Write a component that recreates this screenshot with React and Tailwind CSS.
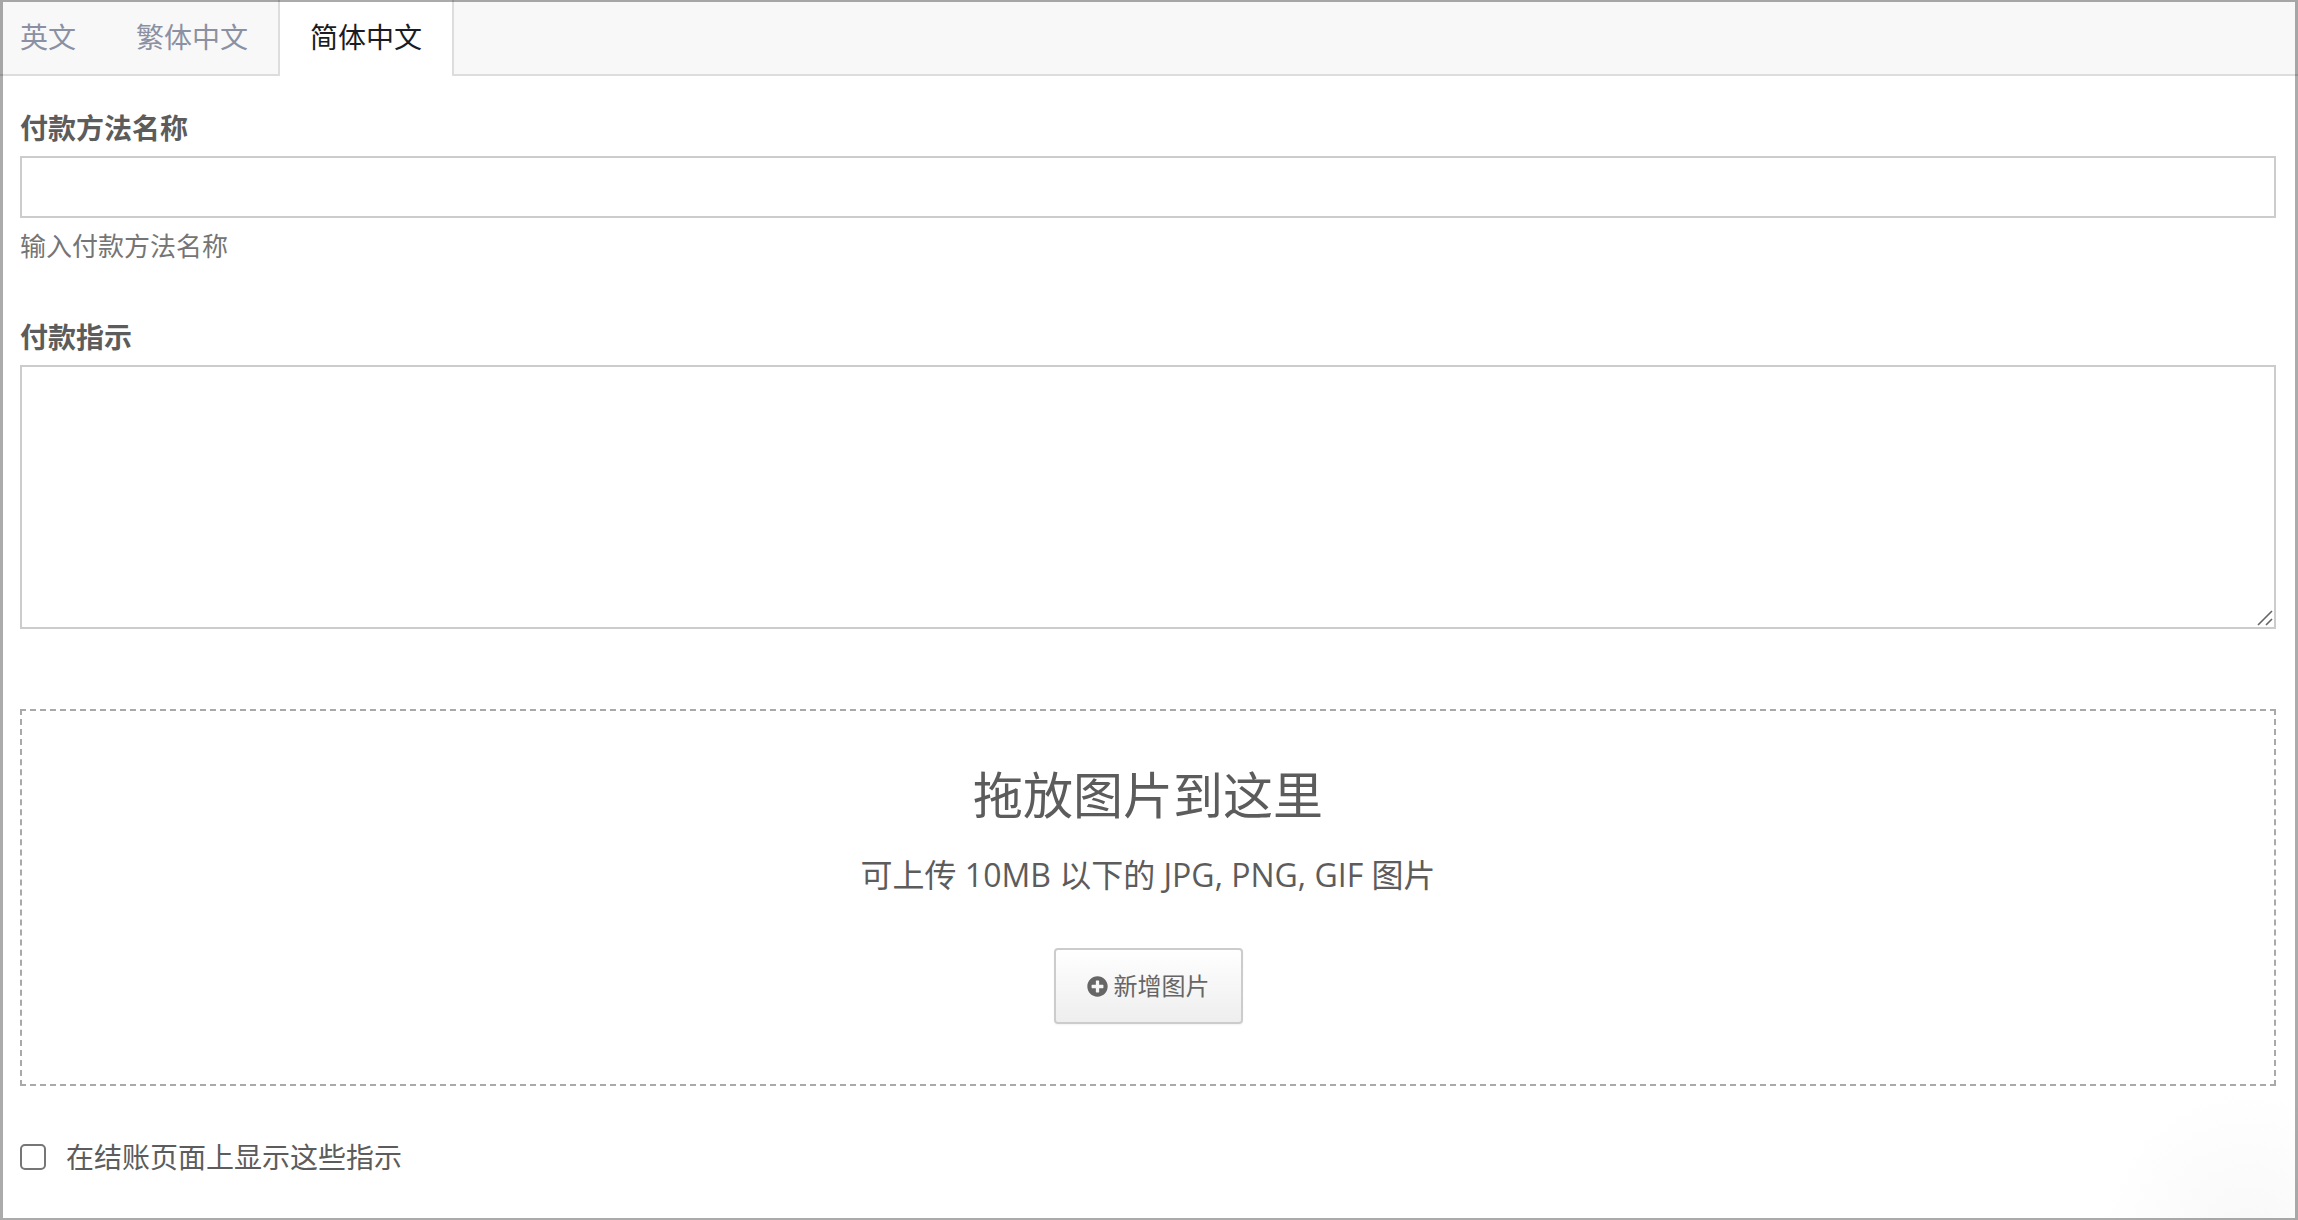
import { useState } from 'react';
import clsx from 'clsx';
import { FaPlusCircle } from 'react-icons/fa';

const LANGUAGES = [
    { key: 'en', label: '英文' },
    { key: 'zh-hant', label: '繁体中文' },
    { key: 'zh-hans', label: '简体中文' },
];

function LanguageTabs({ active, onChange }) {
    return (
        <div role="tablist" className="flex border-b-2 border-[#dddddd] bg-[#f8f8f8]">
            {LANGUAGES.map(({ key, label }, index) => (
                <button
                    key={key}
                    type="button"
                    role="tab"
                    aria-selected={active === key}
                    onClick={() => onChange(key)}
                    className={clsx(
                        '-mb-[2px] h-[76px] pr-[30px] pb-[2px] text-[28px] leading-[40px]',
                        index === 0 ? 'pl-5' : 'pl-[30px]',
                        active === key
                            ? 'border-x-2 border-[#dddddd] bg-white text-[#1b1c23]'
                            : 'text-[#8b91a3]'
                    )}
                >
                    {label}
                </button>
            ))}
        </div>
    );
}

function ResizeGrip() {
    return (
        <svg
            viewBox="0 0 16 16"
            className="pointer-events-none absolute right-[3px] bottom-[3px] h-4 w-4"
            fill="none"
            stroke="#666666"
            strokeWidth="1.6"
            aria-hidden="true"
        >
            <path d="M1 15 15 1M9 15l6-6" />
        </svg>
    );
}

function ImageDropzone() {
    return (
        <section className="mt-20 flex flex-col items-center border-2 border-dashed border-[#a9a9a9] pt-12 pb-[60px] text-center">
            <h2 className="text-[50px] leading-[72px]">拖放图片到这里</h2>
            <p className="mt-5 text-[32px] leading-[48px]">可上传 10MB 以下的 JPG, PNG, GIF 图片</p>
            <button
                type="button"
                className="mt-[49px] flex h-[76px] items-center gap-1.5 rounded border-2 border-[#cccccc] bg-gradient-to-b from-white to-[#eeeeee] px-[31px] text-[24px] leading-[36px] text-[#666666] shadow-xs"
            >
                <FaPlusCircle className="h-[21px] w-[21px]" />
                新增图片
            </button>
        </section>
    );
}

export default function App() {
    const [language, setLanguage] = useState('zh-hans');
    const [name, setName] = useState('');
    const [instructions, setInstructions] = useState('');
    const [showOnCheckout, setShowOnCheckout] = useState(false);

    return (
        <div
            lang="zh-Hans"
            className="relative min-h-screen bg-[radial-gradient(circle_at_right_50px_bottom_-20px,#f8f8f8,#ffffff_150px)] font-['Open_Sans','Noto_Sans_CJK_SC',sans-serif] text-[#5c5c5c] after:pointer-events-none after:absolute after:inset-0 after:border-x-[3px] after:border-y-2 after:border-black/33"
        >
            <LanguageTabs active={language} onChange={setLanguage} />

            <form className="pt-8 pr-[22px] pb-9 pl-5" onSubmit={(e) => e.preventDefault()}>
                <label htmlFor="method-name" className="block text-[28px] leading-[40px] font-bold">
                    付款方法名称
                </label>
                <input
                    id="method-name"
                    type="text"
                    value={name}
                    onChange={(e) => setName(e.target.value)}
                    aria-describedby="method-name-help"
                    className="mt-2 block h-[62px] w-full border-2 border-[#cccccc] bg-white px-3 text-[28px] outline-none"
                />
                <p id="method-name-help" className="mt-2.5 text-[26px] leading-[36px] text-[#757575]">
                    输入付款方法名称
                </p>

                <label htmlFor="instructions" className="mt-[53px] block text-[28px] leading-[40px] font-bold">
                    付款指示
                </label>
                <div className="relative mt-2">
                    <textarea
                        id="instructions"
                        value={instructions}
                        onChange={(e) => setInstructions(e.target.value)}
                        className="block h-[264px] w-full resize-none border-2 border-[#cccccc] bg-white p-3 text-[28px] outline-none"
                    />
                    <ResizeGrip />
                </div>

                <ImageDropzone />

                <label className="mt-[51px] flex items-center gap-5 text-[28px] leading-[40px]">
                    <input
                        type="checkbox"
                        checked={showOnCheckout}
                        onChange={(e) => setShowOnCheckout(e.target.checked)}
                        className="h-[26px] w-[26px] appearance-none rounded-[5px] border-2 border-[#767676] bg-white checked:bg-[#767676]"
                    />
                    在结账页面上显示这些指示
                </label>
            </form>
        </div>
    );
}
